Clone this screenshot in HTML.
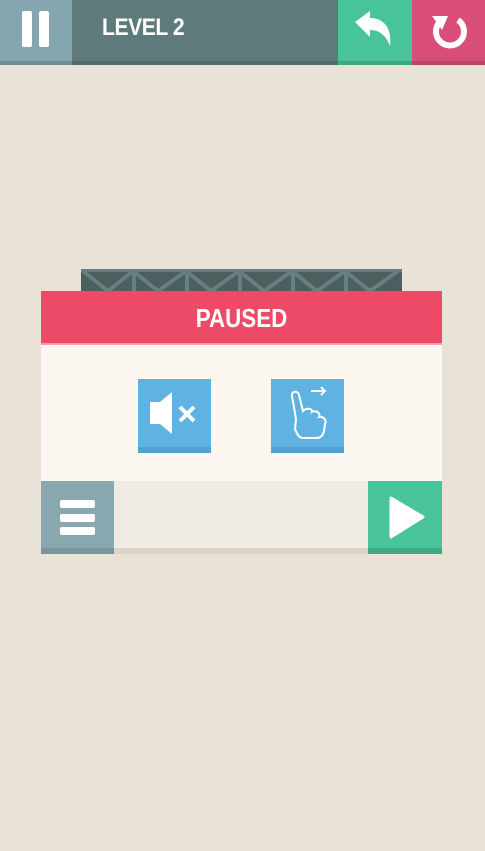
<!DOCTYPE html><html><head><style>
body{margin:0;width:485px;height:851px;background:#e9e2d7;position:relative;overflow:hidden;font-family:"Liberation Sans",sans-serif}
div{position:absolute;box-sizing:border-box}
</style></head><body>
<div style="left:0;top:0;width:72px;height:65px;background:#85a6ae;border-bottom:4px solid #728f96"></div>
<div style="left:22px;top:11px;width:10px;height:36px;background:#fff;border-radius:2px"></div>
<div style="left:39px;top:11px;width:10px;height:36px;background:#fff;border-radius:2px"></div>
<div style="left:72px;top:0;width:266px;height:65px;background:#5f7a7b;border-bottom:4px solid #536a6b"></div>
<div style="left:102px;top:14px;color:#fff;font-weight:bold;font-size:24px;letter-spacing:-0.5px;transform:scaleX(0.88);transform-origin:left">LEVEL 2</div>
<div style="left:338px;top:0;width:74px;height:65px;background:#48c39a;border-bottom:4px solid #3da884"></div>
<svg style="position:absolute;left:352px;top:10px" width="44" height="40" viewBox="0 0 44 40"><path d="M3 12 L18 1 L18 8 C32 8 40 18 38 36 C34 26 28 20 18 20 L18 27 Z" fill="#fff"/></svg>
<div style="left:412px;top:0;width:73px;height:65px;background:#d94e78;border-bottom:4px solid #bc4368"></div>
<svg style="position:absolute;left:428px;top:10px" width="42" height="42" viewBox="0 0 42 42"><path d="M14 10 A14 14 0 1 0 30 10" fill="none" stroke="#fff" stroke-width="6"/><path d="M4 6 L20 6 L14 20 Z" fill="#fff"/></svg>
<div style="left:81px;top:269px;width:321px;height:24px;background:#4c5f5e;border-top:3px solid #65807f"></div>
<svg style="position:absolute;left:81px;top:269px" width="321" height="24"><g stroke="#65807f" stroke-width="4" fill="none"><path d="M2 2 L27 22 L52 2 L77 22 L105 2 L130 22 L158 2 L183 22 L211 2 L236 22 L264 2 L289 22 L317 2"/></g><g fill="#65807f"><rect x="0" y="0" width="321" height="3"/><rect x="51" y="0" width="4" height="24"/><rect x="104" y="0" width="4" height="24"/><rect x="157" y="0" width="4" height="24"/><rect x="210" y="0" width="4" height="24"/><rect x="263" y="0" width="4" height="24"/></g></svg>
<div style="left:41px;top:291px;width:401px;height:54px;background:#ec4a67;border-bottom:2px solid #f0a0a8"></div>
<div style="left:41px;top:291px;width:401px;height:52px;color:#fff;font-weight:bold;font-size:26px;text-align:center;line-height:54px;transform:scaleX(0.86)">PAUSED</div>
<div style="left:41px;top:345px;width:401px;height:136px;background:#fcf7f0"></div>
<div style="left:138px;top:379px;width:73px;height:74px;background:#5eb3e2;border-bottom:6px solid #53a3cf"></div>
<svg style="position:absolute;left:138px;top:379px" width="73" height="68"><path d="M12 23 L22 23 L34 13 L34 55 L22 45 L12 45 Z" fill="#fff"/><path d="M42 28 L56 42 M56 28 L42 42" stroke="#fff" stroke-width="4"/></svg>
<div style="left:271px;top:379px;width:73px;height:74px;background:#5eb3e2;border-bottom:6px solid #53a3cf"></div>
<svg style="position:absolute;left:271px;top:379px" width="73" height="68"><path d="M40 12 L54 12 M50 8 L54 12 L50 16" stroke="#fff" stroke-width="2" fill="none"/><path d="M25 40 L21 17 C20 12 27 11 28 16 L32 32 C36 28 42 30 41 33 C45 31 50 34 48 38 C52 37 56 41 54 45 L53 52 C52 56 50 59 46 59 L32 59 C28 59 26 55 24 50 Z" fill="none" stroke="#fff" stroke-width="2"/></svg>
<div style="left:41px;top:481px;width:401px;height:73px;background:#f0ebe3;border-bottom:6px solid #dad4ca"></div>
<div style="left:41px;top:481px;width:73px;height:73px;background:#88a7ae;border-bottom:6px solid #7a969c"></div>
<div style="left:60px;top:500px;width:35px;height:8px;background:#fff;border-radius:2px"></div>
<div style="left:60px;top:514px;width:35px;height:8px;background:#fff;border-radius:2px"></div>
<div style="left:60px;top:527px;width:35px;height:8px;background:#fff;border-radius:2px"></div>
<div style="left:368px;top:481px;width:74px;height:73px;background:#48c39a;border-bottom:6px solid #3fab86"></div>
<svg style="position:absolute;left:368px;top:481px" width="74" height="67"><path d="M23 17 L55 36 L23 56 Z" fill="#fff" stroke="#fff" stroke-width="3" stroke-linejoin="round"/></svg>
</body></html>
